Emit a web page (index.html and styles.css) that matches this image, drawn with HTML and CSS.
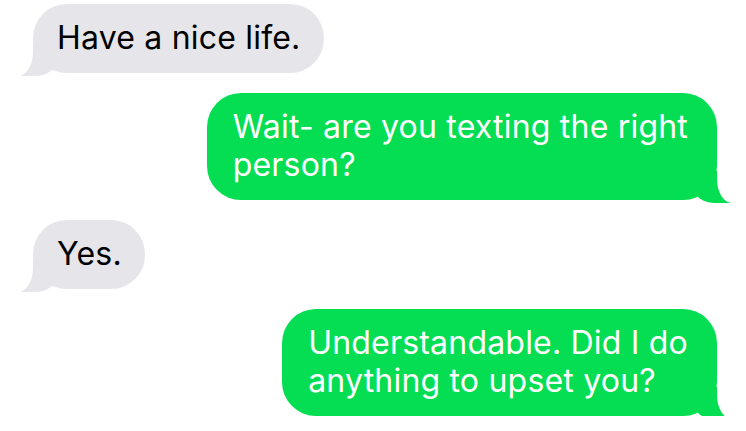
FILE: index.html
```html
<!DOCTYPE html>
<html lang="en">
<head>
  <meta charset="UTF-8" />
  <meta name="viewport" content="width=device-width, initial-scale=1.0"/>
  <title>Messages</title>
  <link rel="stylesheet" href="styles.css">
</head>
<body>

<main class="thread">
  <div class="bubble received">Have a nice life.</div>
  <div class="bubble sent">Wait- are you texting the right<br>person?</div>
  <div class="bubble received">Yes.</div>
  <div class="bubble sent">Understandable. Did I do<br>anything to upset you?</div>
</main>

</body>
</html>
```

FILE: styles.css
```css
* { box-sizing: border-box; margin: 0; padding: 0; }
body { background-color: #fff; font-family: Inter, 'Liberation Sans', Arial, sans-serif; }
.thread { display: flex; flex-direction: column; gap: 20px; padding: 4px 29px 0 33px; }

/* bubbles */
.bubble { position: relative; width: fit-content; font-size: 32px; letter-spacing: 0.2px; line-height: 38px; padding: 15px 23px 16px 24px; border-radius: 34px; }
.received { background-color: #e5e5ea; color: #000; align-self: flex-start; }
.sent { background-color: #05de52; color: #fff; align-self: flex-end; padding: 15px 29px 16px 26px; }

/* tails */
.bubble::before, .bubble::after { content: ""; position: absolute; bottom: -3px; height: 32px; }
.sent::before { right: -14px; width: 38px; background-color: #05de52; border-bottom-left-radius: 22px 16px; }
.sent::after { right: -40px; width: 40px; background-color: #fff; border-bottom-left-radius: 15px 24px; }
.received::before { left: -12px; width: 36px; background-color: #e5e5ea; border-bottom-right-radius: 22px 16px; }
.received::after { left: -38px; width: 38px; background-color: #fff; border-bottom-right-radius: 15px 24px; }
```
